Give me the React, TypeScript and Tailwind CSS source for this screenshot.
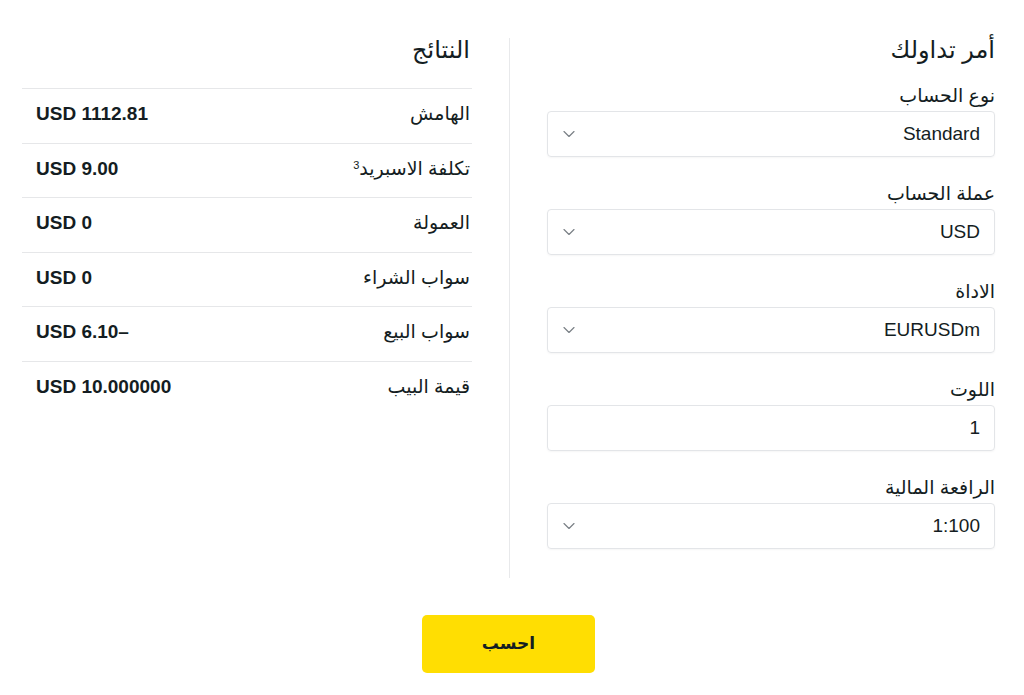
import { ChevronDown } from "lucide-react";

const fields = [
  { label: "نوع الحساب", value: "Standard", select: true },
  { label: "عملة الحساب", value: "USD", select: true },
  { label: "الاداة", value: "EURUSDm", select: true },
  { label: "اللوت", value: "1", select: false },
  { label: "الرافعة المالية", value: "1:100", select: true },
];

const results = [
  { label: "الهامش", value: "USD 1112.81" },
  { label: "تكلفة الاسبريد", value: "USD 9.00", sup: "3" },
  { label: "العمولة", value: "USD 0" },
  { label: "سواب الشراء", value: "USD 0" },
  { label: "سواب البيع", value: "USD 6.10–" },
  { label: "قيمة البيب", value: "USD 10.000000" },
];

const App: React.FC = () => {
  return (
    <div
      dir="rtl"
      className="w-[1024px] h-[695px] bg-white text-[#141d22] font-['Liberation_Sans','DejaVu_Sans',sans-serif]"
    >
      <div className="flex mr-[29px] ml-[22px] pt-[36px]">
        {/* form column */}
        <div className="w-[448px] pb-[29px]">
          <h2 className="text-[24px] leading-[28px] mb-[20px]">أمر تداولك</h2>
          {fields.map((f, i) => (
            <div key={f.label} className={i < fields.length - 1 ? "mb-[25px]" : ""}>
              <div className="text-[19px] leading-6 mb-[3px]">{f.label}</div>
              <div className="flex items-center justify-between h-[46px] border border-[#e3e5e8] rounded-[4px] pr-[14px] pl-[11px] shadow-[0_1px_2px_rgba(0,0,0,0.04)]">
                <span className="text-[19px]">{f.value}</span>
                {f.select && (
                  <ChevronDown className="w-5 h-5 text-[#7a8086]" strokeWidth={1.4} />
                )}
              </div>
            </div>
          ))}
        </div>

        {/* divider */}
        <div className="w-px bg-[#e8e9eb] mx-[37px] mt-[2px]" />

        {/* results column */}
        <div className="w-[450px]">
          <h2 className="text-[24px] leading-[28px] mb-[24px] pr-[2px]">النتائج</h2>
          {results.map((r) => (
            <div
              key={r.label}
              className="flex items-center justify-between h-[54.6px] border-t border-[#e6e7e9] pr-[2px] pl-[14px] pb-[3px]"
            >
              <span className="text-[19px]">
                {r.label}
                {r.sup && <sup className="text-[11px]">{r.sup}</sup>}
              </span>
              <span dir="ltr" className="text-[19px] font-bold">
                {r.value}
              </span>
            </div>
          ))}
        </div>
      </div>

      <div className="flex justify-center mt-[37px] pr-[7px]">
        <button
          type="button"
          className="w-[173px] h-[58px] bg-[#ffde02] rounded-[5px] text-[17px] font-bold text-[#141d22]"
        >
          احسب
        </button>
      </div>
    </div>
  );
};

export default App;
